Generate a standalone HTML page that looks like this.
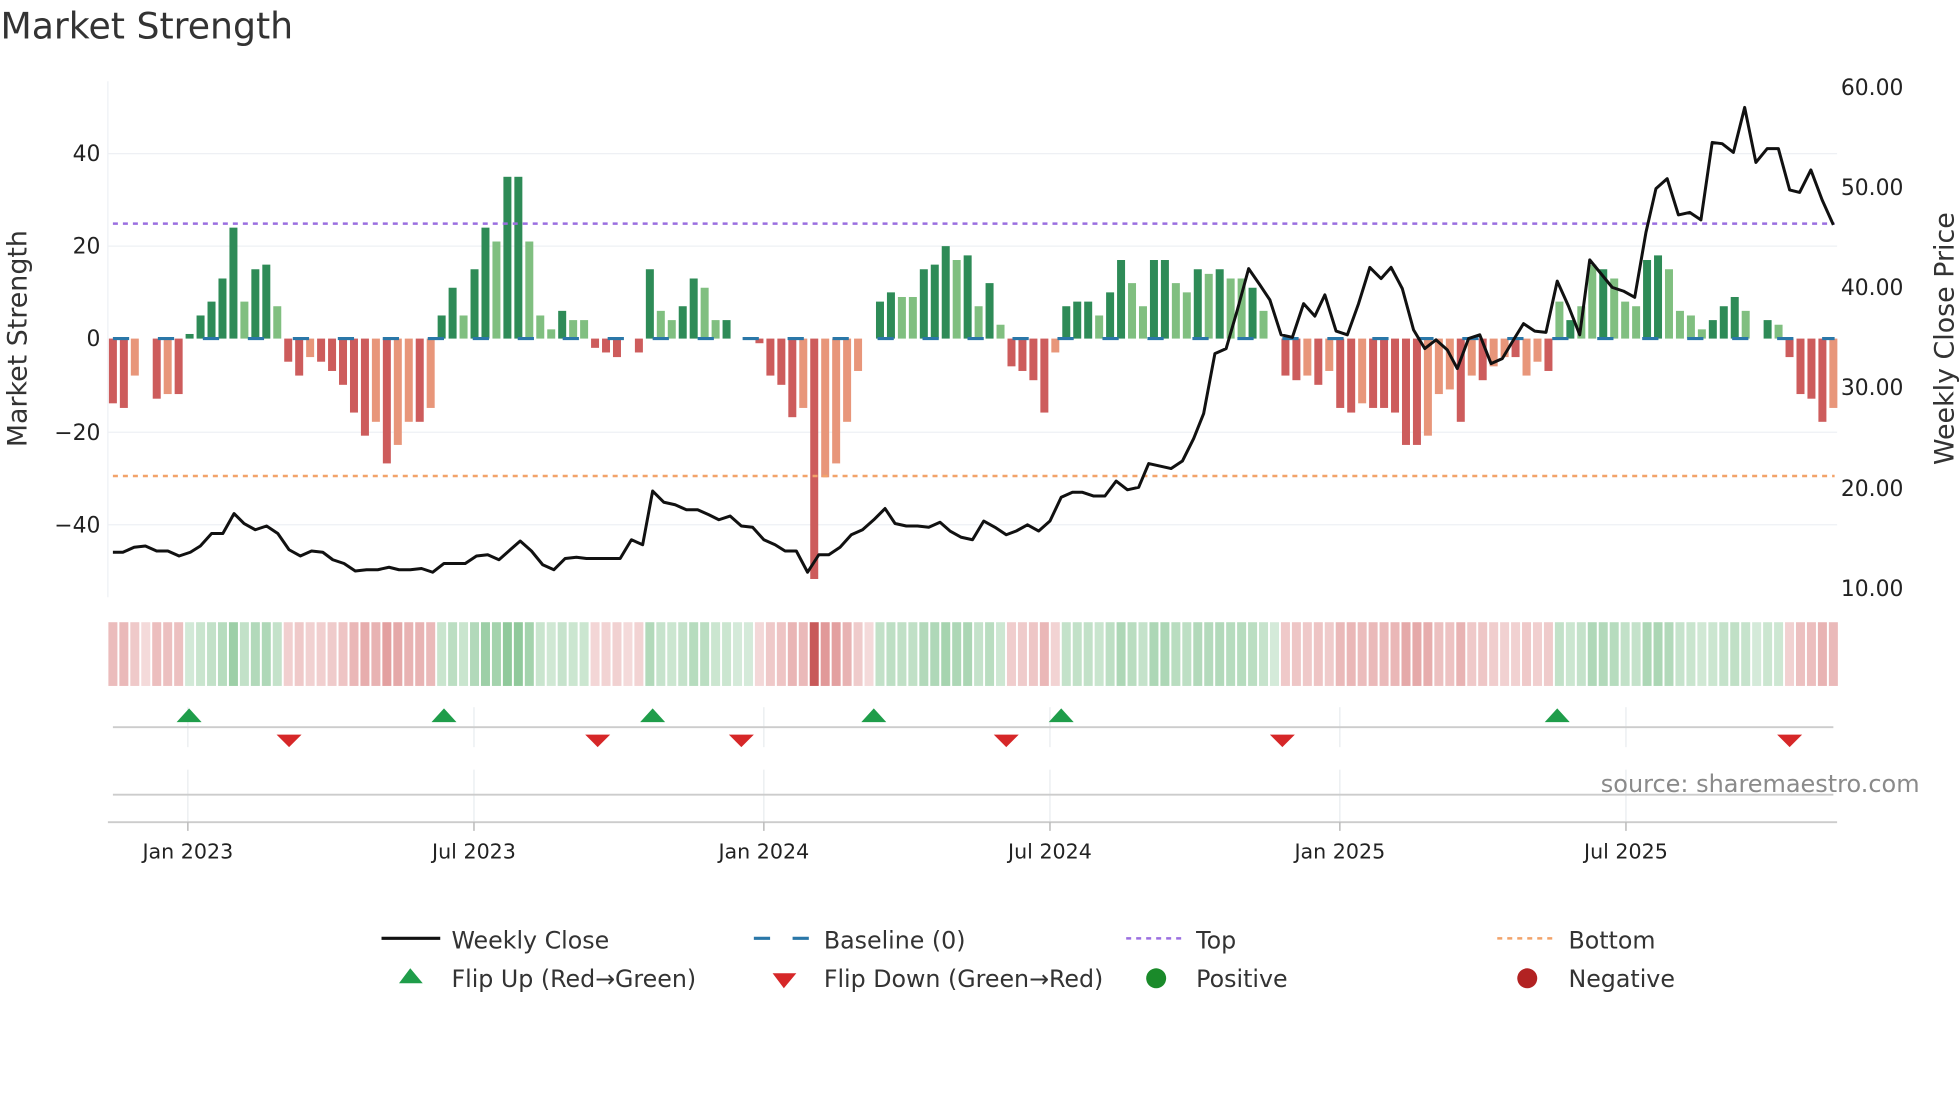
<!DOCTYPE html>
<html><head><meta charset="utf-8">
<style>
html,body{margin:0;padding:0;background:#fff;width:1960px;height:1102px;overflow:hidden}
svg{display:block}
text{font-family:"DejaVu Sans","Liberation Sans",sans-serif}
</style></head>
<body>
<svg id="s" width="1960" height="1102" viewBox="0 0 1568 882" xmlns="http://www.w3.org/2000/svg">
<rect width="1568" height="882" fill="#fff"/>
<text x="0" y="31" font-size="29" fill="#333">Market Strength</text>
<g stroke="#eef0f4" stroke-width="1">
<line x1="86" y1="123" x2="1470" y2="123"/>
<line x1="86" y1="197" x2="1470" y2="197"/>
<line x1="86" y1="346" x2="1470" y2="346"/>
<line x1="86" y1="420" x2="1470" y2="420"/>
<line x1="86" y1="65" x2="86" y2="478"/>
</g>
<g id="bars"></g>
<line x1="90" y1="271" x2="1468" y2="271" stroke="#2a77a8" stroke-width="2.5" stroke-dasharray="13,23"/>
<line x1="90" y1="179" x2="1468" y2="179" stroke="#9b6fe0" stroke-width="2" stroke-dasharray="4,4"/>
<line x1="90" y1="381" x2="1468" y2="381" stroke="#f2a36a" stroke-width="2" stroke-dasharray="4,4"/>
<polyline id="price" fill="none" stroke="#111" stroke-width="2.4" stroke-linejoin="round"/>
<g font-size="17.5" fill="#222">
<text x="80" y="129" text-anchor="end">40</text>
<text x="80" y="203" text-anchor="end">20</text>
<text x="80" y="277" text-anchor="end">0</text>
<text x="80" y="352" text-anchor="end">−20</text>
<text x="80" y="426" text-anchor="end">−40</text>
<text x="1473" y="76">60.00</text>
<text x="1473" y="156">50.00</text>
<text x="1473" y="236">40.00</text>
<text x="1473" y="316">30.00</text>
<text x="1473" y="397">20.00</text>
<text x="1473" y="477">10.00</text>
</g>
<text transform="translate(21,271) rotate(-90)" text-anchor="middle" font-size="21.5" fill="#333">Market Strength</text>
<text transform="translate(1563,271) rotate(-90)" text-anchor="middle" font-size="21.5" fill="#333">Weekly Close Price</text>
<g id="heat"></g>
<g stroke="#e8ecef" stroke-width="1">
<line x1="150" y1="566" x2="150" y2="598"/><line x1="379" y1="566" x2="379" y2="598"/><line x1="611" y1="566" x2="611" y2="598"/><line x1="840" y1="566" x2="840" y2="598"/><line x1="1072" y1="566" x2="1072" y2="598"/><line x1="1301" y1="566" x2="1301" y2="598"/>
<line x1="150" y1="616" x2="150" y2="658"/><line x1="379" y1="616" x2="379" y2="658"/><line x1="611" y1="616" x2="611" y2="658"/><line x1="840" y1="616" x2="840" y2="658"/><line x1="1072" y1="616" x2="1072" y2="658"/><line x1="1301" y1="616" x2="1301" y2="658"/>
</g>
<line x1="90" y1="582" x2="1467" y2="582" stroke="#ccc" stroke-width="1.5"/>
<line x1="90" y1="636" x2="1467" y2="636" stroke="#ccc" stroke-width="1.5"/>
<line x1="86" y1="658" x2="1470" y2="658" stroke="#ccc" stroke-width="1.5"/>
<g stroke="#bbb" stroke-width="1.2">
<line x1="150" y1="658" x2="150" y2="665"/><line x1="379" y1="658" x2="379" y2="665"/><line x1="611" y1="658" x2="611" y2="665"/><line x1="840" y1="658" x2="840" y2="665"/><line x1="1072" y1="658" x2="1072" y2="665"/><line x1="1301" y1="658" x2="1301" y2="665"/>
</g>
<g id="flips"></g>
<text x="1536" y="634" text-anchor="end" font-size="19.2" fill="#8a8a8a">source: sharemaestro.com</text>
<g font-size="16.5" fill="#222" text-anchor="middle">
<text x="150" y="687">Jan 2023</text><text x="379" y="687">Jul 2023</text><text x="611" y="687">Jan 2024</text><text x="840" y="687">Jul 2024</text><text x="1072" y="687">Jan 2025</text><text x="1301" y="687">Jul 2025</text>
</g>
<g font-size="19" fill="#333">
<line x1="305" y1="751" x2="352" y2="751" stroke="#111" stroke-width="2.5"/>
<text x="361" y="759">Weekly Close</text>
<line x1="603" y1="751" x2="647" y2="751" stroke="#2a77a8" stroke-width="2.5" stroke-dasharray="13,18"/>
<text x="659" y="759">Baseline (0)</text>
<line x1="901" y1="751" x2="945" y2="751" stroke="#9b6fe0" stroke-width="2" stroke-dasharray="4,4"/>
<text x="957" y="759">Top</text>
<line x1="1198" y1="751" x2="1243" y2="751" stroke="#f2a36a" stroke-width="2" stroke-dasharray="4,4"/>
<text x="1255" y="759">Bottom</text>
<polygon points="328,775 319,787 338,787" fill="#1f9d4a"/>
<text x="361" y="790">Flip Up (Red→Green)</text>
<polygon points="618,779 637,779 627,791" fill="#d62728"/>
<text x="659" y="790">Flip Down (Green→Red)</text>
<circle cx="925" cy="783" r="8" fill="#1a8a2a"/>
<text x="957" y="790">Positive</text>
<circle cx="1222" cy="783" r="8" fill="#b22222"/>
<text x="1255" y="790">Negative</text>
</g>
</svg>
<script>
var NS="http://www.w3.org/2000/svg";
function el(p,t,a){var e=document.createElementNS(NS,t);for(var k in a)e.setAttribute(k,a[k]);p.appendChild(e);return e;}
var B="-14,-15,-8l,0,-13,-12l,-12,1,5,8,13,24,8l,15,16,7l,-5,-8,-4l,-5,-7,-10,-16,-21,-18l,-27,-23l,-18l,-18,-15l,5,11,5l,15,24,21l,35,35,21l,5l,2l,6,4l,4l,-2,-3,-4,0,-3,15,6l,4l,7,13,11l,4l,4,0,0,-1,-8,-10,-17,-15l,-52,-30l,-27l,-18l,-7l,0,8,10,9l,9l,15,16,20,17l,18,7l,12,3l,-6,-7,-9,-16,-3l,7,8,8,5l,10,17,12l,7l,17,17,12l,10l,15,14l,15,13l,13l,11,6l,0,-8,-9,-8l,-10,-7l,-15,-16,-14l,-15,-15,-16,-23,-23,-21l,-12l,-11l,-18,-8l,-9,-6l,-4l,-4,-8l,-5l,-7,8l,4,7l,16l,15,13l,8l,7l,17,18,15l,6l,5l,2l,4,7,9,6l,0,4,3l,-4,-12,-13,-18,-15l".split(",");
var bars=document.getElementById("bars"),heat=document.getElementById("heat");
var n=B.length,step=(1467-90)/(n-1),prevSign=-1;
for(var i=0;i<n;i++){
 var s=B[i],light=s.indexOf("l")>=0,v=parseFloat(s),x=90+i*step;
 var h=Math.abs(v)*3.7,col;
 if(v>0)col=light?"#80bf80":"#2e8b57";else col=light?"#e8967a":"#cd5c5c";
 if(v!=0)el(bars,"rect",{x:x-3.2,y:v>0?271-h:271,width:6.4,height:h,fill:col});
 var sg=v>0?1:(v<0?-1:prevSign);prevSign=sg;
 var hc=sg>0?"rgba(60,160,80,"+(0.22+0.35*Math.min(1,Math.abs(v)/30))+")":"rgba(200,70,70,"+(0.2+0.35*Math.min(1,Math.abs(v)/30))+")";
 if(v<-40)hc="rgba(190,60,60,0.85)";
 el(heat,"rect",{x:x-3.6,y:498,width:7.2,height:51,fill:hc});
}
var P=[[90,442],[98,442],[107,438],[116,437],[125,441],[134,441],[143,445],[152,442],[160,437],[169,427],[178,427],[187,411],[195,419],[204,424],[213,421],[222,427],[231,440],[240,445],[249,441],[258,442],[266,448],[275,451],[284,457],[293,456],[302,456],[311,454],[319,456],[328,456],[337,455],[346,458],[355,451],[364,451],[372,451],[381,445],[390,444],[399,448],[408,440],[416,433],[425,441],[434,452],[443,456],[452,447],[461,446],[469,447],[478,447],[487,447],[496,447],[505,432],[514,436],[522,393],[531,402],[540,404],[549,408],[558,408],[567,412],[575,416],[584,413],[593,421],[602,422],[611,432],[620,436],[628,441],[637,441],[646,458],[655,444],[663,444],[672,438],[681,428],[690,424],[699,416],[708,407],[716,419],[725,421],[734,421],[743,422],[752,418],[760,425],[769,430],[778,432],[787,417],[796,422],[805,428],[813,425],[822,420],[831,425],[840,417],[849,398],[858,394],[866,394],[875,397],[884,397],[893,385],[902,392],[911,390],[919,371],[928,373],[937,375],[946,369],[955,351],[963,331],[972,283],[981,279],[990,248],[999,215],[1008,228],[1016,240],[1025,268],[1034,270],[1043,243],[1052,253],[1060,236],[1069,265],[1078,268],[1087,243],[1096,214],[1105,223],[1113,214],[1122,231],[1131,264],[1140,279],[1149,272],[1158,280],[1166,295],[1175,271],[1184,268],[1193,291],[1202,287],[1211,272],[1219,259],[1228,265],[1237,266],[1246,225],[1255,245],[1264,268],[1272,208],[1281,219],[1290,230],[1299,233],[1308,238],[1317,186],[1325,151],[1334,143],[1343,172],[1352,170],[1361,176],[1370,114],[1378,115],[1387,122],[1396,86],[1405,130],[1414,119],[1423,119],[1432,152],[1440,154],[1449,136],[1458,160],[1467,180]];
document.getElementById("price").setAttribute("points",P.map(function(p){return p.join(",")}).join(" "));
var f=document.getElementById("flips");
[151,355,522,699,849,1246].forEach(function(x){el(f,"polygon",{points:(x)+",567 "+(x-10)+",578 "+(x+10)+",578",fill:"#1f9d4a"});});
[231,478,593,805,1026,1432].forEach(function(x){el(f,"polygon",{points:(x-10)+",588 "+(x+10)+",588 "+x+",598",fill:"#d62728"});});
</script>
</body></html>
